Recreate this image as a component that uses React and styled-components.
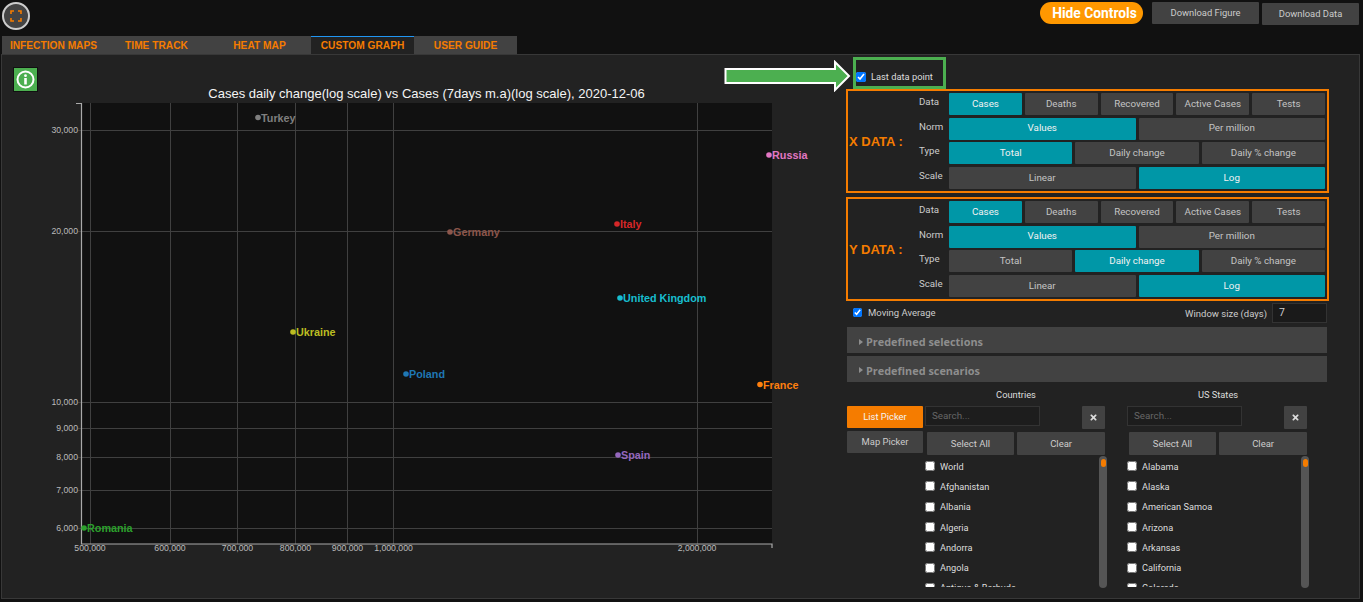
import React from "react";
import styled, { createGlobalStyle } from "styled-components";
import { FaTimes } from "react-icons/fa";

const Global = createGlobalStyle`
  html, body { margin: 0; padding: 0; background: #111; height: 100%; overflow: hidden; }
  body { font-family: Roboto, "Liberation Sans", sans-serif; color: #ccc; }
  * { box-sizing: border-box; }
`;

const Page = styled.div`width: 1363px; height: 602px; overflow: hidden; background: #111;`;

const Header = styled.header`
  height: 36px; display: flex; align-items: flex-start; justify-content: space-between;
  padding: 2px 4px 0 2px;
`;
const RoundButton = styled.button`
  width: 28px; height: 28px; padding: 0; border-radius: 50%; border: 2px solid #ccc;
  background: #444; display: flex; align-items: center; justify-content: center;
`;
const HeaderActions = styled.div`display: flex; align-items: flex-start; gap: 3px;`;
const HidePill = styled.button`
  width: 103px; height: 22px; margin-right: 6px; border: 0; border-radius: 11px; padding: 0 0 0 6px;
  background: #ff9800; color: #fff; font: bold 13.8px "Roboto", sans-serif;
`;
const HeaderButton = styled.button`
  width: ${p => p.$w}px; height: 22px; margin-top: ${p => p.$top || 0}px; border: 0; padding: 0 0 2px; border-radius: 1px;
  background: #424242; color: #ccc; font: 9.4px Roboto, sans-serif;
`;

const Tabs = styled.nav`height: 18px; display: flex; padding-left: 2px;`;
const Tab = styled.div`
  width: 103px; height: 18px; display: flex; align-items: center; justify-content: center;
  background: ${p => (p.$active ? "#222" : "#424242")};
  border-top: 1px solid ${p => (p.$active ? "#2196f3" : "#424242")};
  color: #f57c00; font: bold 10.2px "Liberation Sans", sans-serif; white-space: nowrap;
`;

const Panel = styled.main`
  width: 1359px; height: 545px; margin-left: 1px; background: #222; border: 1px solid #383838;
  display: flex; position: relative;
`;
const ChartColumn = styled.section`width: 844px; height: 543px; position: relative; flex: none;`;
const InfoButton = styled.button`
  position: absolute; left: 11px; top: 12px; width: 25px; height: 25px; padding: 0;
  background: #4caf50; border: 1px solid #111; display: flex; align-items: center; justify-content: center;
`;
const ChartSvg = styled.svg`display: block;`;

const Controls = styled.section`width: 486px; padding-top: 2px; position: relative; flex: none;`;
const LastPoint = styled.label`
  width: 93px; height: 32px; margin-left: 7px; border: 3px solid #4caf50; display: flex; align-items: center;
  padding: 7px 0 0 0; gap: 5px; font-size: 9.3px; color: #ddd; white-space: nowrap;
`;
const Arrow = styled.svg`position: absolute; left: -122px; top: 5px;`;
const Check = styled.input`
  width: ${p => p.$size || 10}px; height: ${p => p.$size || 10}px; margin: 0; flex: none;
`;

const DataBox = styled.div`
  width: 483px; height: 104px; border: 2px solid #f57c00; display: flex; align-items: center;
  margin-top: ${p => p.$gap || 0}px;
`;
const DataTitle = styled.div`
  width: 71px; padding-left: 1px; color: #f57c00; font: bold 13px "Liberation Sans", sans-serif; flex: none; white-space: nowrap;
`;
const DataRows = styled.div`flex: 1; display: flex; flex-direction: column; gap: 2.7px; padding-right: 2px;`;
const DataRow = styled.div`display: grid; grid-template-columns: 30px 1fr; height: 22px;`;
const RowLabel = styled.div`font-size: 9.7px; color: #ccc; line-height: 17px;`;
const Choices = styled.div`display: grid; grid-template-columns: repeat(${p => p.$n}, 1fr); gap: 3px;`;
const Choice = styled.button`
  border: 0; padding: 0 0 1.5px; border-radius: 1px; height: 22px;
  background: ${p => (p.$on ? "#0097a7" : "#424242")}; color: ${p => (p.$on ? "#f2f2f2" : "#c4c4c4")};
  font: 9.8px Roboto, sans-serif; white-space: nowrap;
`;

const AverageRow = styled.div`
  width: 481px; height: 20px; margin-top: 2px; display: flex; align-items: center; justify-content: space-between;
  padding-left: 7px; font-size: 9.5px; color: #ccc;
`;
const AverageLabel = styled.label`display: flex; align-items: center; gap: 6px; padding-bottom: 1px;`;
const WindowLabel = styled.label`display: flex; align-items: center; gap: 5px;`;
const NumberBox = styled.div`
  width: 55px; height: 20px; border: 1px solid #333; background: #1a1a1a; padding: 0 0 0 6px; line-height: 17px;
  font-size: 10.5px; color: #ccc;
`;
const Accordion = styled.div`
  width: 480px; height: 26px; margin: ${p => p.$top}px 0 0 1px; background: #424242; color: #8e8e8e;
  font: bold 10.9px "Open Sans", sans-serif; display: flex; align-items: center; gap: 3px; padding: 3px 0 0 12px;
`;
const Caret = styled.span`
  width: 0; height: 0; border-left: 4px solid #8e8e8e; border-top: 3.5px solid transparent; border-bottom: 3.5px solid transparent;
`;

const Picker = styled.div`
  display: grid; grid-template-columns: 76px 182px 182px; column-gap: 2px; margin: 7.5px 0 0 1px; align-items: start;
`;
const PickerNav = styled.div`display: flex; flex-direction: column; gap: 3px; margin-top: 17px;`;
const NavButton = styled.button`
  border: 0; padding: 0 0 1px; height: 22px; border-radius: 1px; background: ${p => (p.$on ? "#f57c00" : "#424242")};
  color: ${p => (p.$on ? "#f4f4f4" : "#ccc")}; font: 9.4px Roboto, sans-serif;
`;
const ListColumn = styled.div`width: 182px; margin-left: ${p => p.$left || 0}px;`;
const ColumnTitle = styled.div`height: 12px; line-height: 12px; text-align: center; font-size: 9.3px; color: #ddd;`;
const SearchRow = styled.div`display: flex; justify-content: space-between; margin-top: 5px; padding-right: 2px;`;
const SearchBox = styled.div`
  width: 115px; height: 20px; border: 1px solid #333; color: #666; font-size: 9.8px; line-height: 17px; padding-left: 6px; background: #1d1d1d;
`;
const ClearIcon = styled.button`
  width: 23px; height: 23px; border: 0; padding: 0; background: #424242; color: #ddd; border-radius: 1px;
  display: flex; align-items: center; justify-content: center;
`;
const BulkRow = styled.div`
  display: grid; grid-template-columns: 1fr 1fr; gap: 3px; margin: 3px 2px 0 1.5px; 
`;
const BulkButton = styled.button`
  height: 23px; border: 0; padding: 0; border-radius: 1px; background: #424242; color: #ccc; font: 9.5px Roboto, sans-serif;
`;
const ListBody = styled.div`display: flex; justify-content: space-between; margin-top: 1px; height: 132px;`;
const Items = styled.div`height: 131px; overflow: hidden; flex: 1;`;
const Item = styled.label`
  height: 20.3px; display: flex; align-items: center; gap: 5px; font-size: 9.2px; color: #ddd; white-space: nowrap;
`;
const Track = styled.div`
  width: 8px; height: 132px; background: #555; border-radius: 4px; padding: 3px 1.5px; flex: none; margin-right: 0;
`;
const Thumb = styled.div`height: 8px; background: #f57c00; border-radius: 2.5px;`;

const xTicks = [[90, "500,000"], [170, "600,000"], [237.5, "700,000"], [295.5, "800,000"], [347.5, "900,000"], [393.5, "1,000,000"], [697, "2,000,000"]];
const yTicks = [[130, "30,000"], [231, "20,000"], [402, "10,000"], [428, "9,000"], [457, "8,000"], [490, "7,000"], [528, "6,000"]];
const points = [
  ["Turkey", 258, 117.5, "#7f7f7f"], ["Russia", 769, 155, "#e377c2"], ["Germany", 450, 232, "#8c564b"],
  ["Italy", 617, 224, "#d62728"], ["United Kingdom", 620, 298, "#17becf"], ["Ukraine", 293, 332, "#bcbd22"],
  ["Poland", 406, 374, "#1f77b4"], ["France", 760, 384.5, "#ff7f0e"], ["Spain", 618, 455, "#9467bd"], ["Romania", 84, 528, "#2ca02c"],
];

const Chart = () => (
  <ChartSvg width="844" height="543" viewBox="2 55 844 543">
    <text x="426.5" y="98" textAnchor="middle" fontFamily="Liberation Sans" fontSize="13" fill="#f4f4f4">
      Cases daily change(log scale) vs Cases (7days m.a)(log scale), 2020-12-06
    </text>
    <rect x="81" y="103" width="691" height="441" fill="#111" />
    {xTicks.map(([x]) => <line key={x} x1={x} x2={x} y1="103" y2="544" stroke="#404040" shapeRendering="crispEdges" />)}
    {yTicks.map(([y]) => <line key={y} x1="78" x2="772" y1={y} y2={y} stroke="#404040" shapeRendering="crispEdges" />)}
    <path d="M76 103.5H81.5V544H772V548" fill="none" stroke="#aaa" strokeWidth="1.2" />
    {xTicks.map(([x, t]) => <text key={t} x={x} y="551" textAnchor="middle" fontFamily="Liberation Sans" fontSize="8.7" fill="#bbb">{t}</text>)}
    {yTicks.map(([y, t]) => <text key={t} x="78" y={y + 3} textAnchor="end" fontFamily="Liberation Sans" fontSize="8.7" fill="#bbb">{t}</text>)}
    {points.map(([name, x, y, c]) => (
      <g key={name}>
        <circle cx={x} cy={y} r="2.8" fill={c} />
        <text x={x + 3} y={y + 4} fontFamily="Liberation Sans" fontWeight="bold" fontSize="10.8" fill={c}>{name}</text>
      </g>
    ))}
  </ChartSvg>
);

const DataSection = ({ title, type, gap }) => {
  const rows = [
    ["Data", ["Cases", "Deaths", "Recovered", "Active Cases", "Tests"], "Cases"],
    ["Norm", ["Values", "Per million"], "Values"],
    ["Type", ["Total", "Daily change", "Daily % change"], type],
    ["Scale", ["Linear", "Log"], "Log"],
  ];
  return (
    <DataBox $gap={gap}>
      <DataTitle>{title}</DataTitle>
      <DataRows>
        {rows.map(([label, opts, on]) => (
          <DataRow key={label}>
            <RowLabel>{label}</RowLabel>
            <Choices $n={opts.length}>
              {opts.map(o => <Choice key={o} $on={o === on}>{o}</Choice>)}
            </Choices>
          </DataRow>
        ))}
      </DataRows>
    </DataBox>
  );
};

const ListPanel = ({ title, items, left }) => (
  <ListColumn $left={left}>
    <ColumnTitle>{title}</ColumnTitle>
    <SearchRow>
      <SearchBox>Search...</SearchBox>
      <ClearIcon><FaTimes size={9} /></ClearIcon>
    </SearchRow>
    <BulkRow>
      <BulkButton>Select All</BulkButton>
      <BulkButton>Clear</BulkButton>
    </BulkRow>
    <ListBody>
      <Items>
        {items.map(i => <Item key={i}><Check type="checkbox" readOnly /><span>{i}</span></Item>)}
      </Items>
      <Track><Thumb /></Track>
    </ListBody>
  </ListColumn>
);

export default function App() {
  return (
    <Page>
      <Global />
      <Header>
        <RoundButton>
          <svg width="12" height="12" viewBox="0 0 12 12" fill="none" stroke="#f57c00" strokeWidth="1.6">
            <path d="M1 4V1H4M8 1H11V4M11 8V11H8M4 11H1V8" />
          </svg>
        </RoundButton>
        <HeaderActions>
          <HidePill>Hide Controls</HidePill>
          <HeaderButton $w={107}>Download Figure</HeaderButton>
          <HeaderButton $w={97} $top={1}>Download Data</HeaderButton>
        </HeaderActions>
      </Header>
      <Tabs>
        <Tab>INFECTION MAPS</Tab>
        <Tab>TIME TRACK</Tab>
        <Tab>HEAT MAP</Tab>
        <Tab $active>CUSTOM GRAPH</Tab>
        <Tab>USER GUIDE</Tab>
      </Tabs>
      <Panel>
        <ChartColumn>
          <Chart />
          <InfoButton>
            <svg width="19" height="19" viewBox="0 0 19 19" fill="none">
              <circle cx="9.5" cy="9.5" r="8" stroke="#fff" strokeWidth="2" />
              <circle cx="9.5" cy="5.7" r="1.4" fill="#fff" />
              <rect x="8.2" y="8" width="2.6" height="6.5" fill="#fff" />
            </svg>
          </InfoButton>
        </ChartColumn>
        <Controls>
          <Arrow width="128" height="32" viewBox="0 0 128 32">
            <path d="M1.5 9H111V2L125 16L111 30V23H1.5Z" fill="#4caf50" stroke="#fff" strokeWidth="2" />
          </Arrow>
          <LastPoint><Check type="checkbox" defaultChecked />Last data point</LastPoint>
          <DataSection title="X DATA :" type="Total" />
          <DataSection title="Y DATA :" type="Daily change" gap={4} />
          <AverageRow>
            <AverageLabel><Check $size={9} type="checkbox" defaultChecked />Moving Average</AverageLabel>
            <WindowLabel>Window size (days)<NumberBox>7</NumberBox></WindowLabel>
          </AverageRow>
          <Accordion $top={4}><Caret />Predefined selections</Accordion>
          <Accordion $top={2.5}><Caret />Predefined scenarios</Accordion>
          <Picker>
            <PickerNav>
              <NavButton $on>List Picker</NavButton>
              <NavButton>Map Picker</NavButton>
            </PickerNav>
            <ListPanel title="Countries" items={["World", "Afghanistan", "Albania", "Algeria", "Andorra", "Angola", "Antigua & Barbuda"]} />
            <ListPanel title="US States" left={18} items={["Alabama", "Alaska", "American Samoa", "Arizona", "Arkansas", "California", "Colorado"]} />
          </Picker>
        </Controls>
      </Panel>
    </Page>
  );
}
